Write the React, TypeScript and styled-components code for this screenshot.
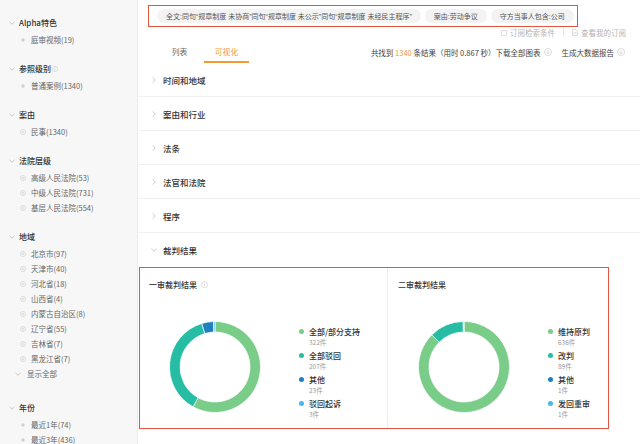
import React from "react";
import styled, { createGlobalStyle } from "styled-components";

const COLORS = {
  ORANGE: "#f29a33",
  RED: "#e5563f",
  TEXT: "#333",
  TEXT_2: "#666",
  MUTED: "#aaa",
  LINE: "#f0f0f0",
};

const GlobalStyle = createGlobalStyle`
  html, body {
    margin: 0;
    padding: 0;
    background: #fff;
  }
  body {
    font-family: "Noto Sans CJK SC", "Noto Sans", sans-serif;
    color: ${COLORS.TEXT};
  }
  #root {
    width: 640px;
    height: 444px;
    overflow: hidden;
  }
`;

type TFilterItem = { label: string; kind: "dot" | "plus" };
type TFilterGroup = { title: string; info?: boolean; more?: boolean; items: TFilterItem[] };

const plus = (label: string): TFilterItem => ({ label, kind: "plus" });
const dot = (label: string): TFilterItem => ({ label, kind: "dot" });

const FILTERS: TFilterGroup[] = [
  { title: "Alpha特色", items: [dot("庭审视频(19)")] },
  { title: "参照级别", info: true, items: [dot("普通案例(1340)")] },
  { title: "案由", items: [plus("民事(1340)")] },
  {
    title: "法院层级",
    items: [plus("高级人民法院(53)"), plus("中级人民法院(731)"), plus("基层人民法院(554)")],
  },
  {
    title: "地域",
    more: true,
    items: [
      plus("北京市(97)"),
      plus("天津市(40)"),
      plus("河北省(18)"),
      plus("山西省(4)"),
      plus("内蒙古自治区(8)"),
      plus("辽宁省(55)"),
      plus("吉林省(7)"),
      plus("黑龙江省(7)"),
    ],
  },
  { title: "年份", items: [dot("最近1年(74)"), dot("最近3年(436)")] },
];

const CHIPS = [
  "全文:同句“规章制度 未协商”同句“规章制度 未公示”同句“规章制度 未经民主程序”",
  "案由:劳动争议",
  "守方当事人包含:公司",
];

const SECTIONS = ["时间和地域", "案由和行业", "法条", "法官和法院", "程序"];

type TSlice = { label: string; count: number; color: string };

const GREEN = "#7acc89";
const TEAL = "#27bda5";
const BLUE = "#1f7fbf";
const SKY = "#46b8ef";

const FIRST: TSlice[] = [
  { label: "全部/部分支持", count: 322, color: GREEN },
  { label: "全部驳回", count: 207, color: TEAL },
  { label: "其他", count: 23, color: BLUE },
  { label: "驳回起诉", count: 3, color: SKY },
];

const SECOND: TSlice[] = [
  { label: "维持原判", count: 636, color: GREEN },
  { label: "改判", count: 89, color: TEAL },
  { label: "其他", count: 1, color: BLUE },
  { label: "发回重审", count: 1, color: SKY },
];

const Chevron = ({ down }: { down?: boolean }) => (
  <svg width="6" height="6" viewBox="0 0 6 6">
    {down ? (
      <polyline points="0.5,1.8 3,4.2 5.5,1.8" fill="none" stroke="#bbb" strokeWidth="0.8" />
    ) : (
      <polyline points="1.8,0.5 4.2,3 1.8,5.5" fill="none" stroke="#bbb" strokeWidth="0.8" />
    )}
  </svg>
);

const InfoIcon = ({ size = 7 }: { size?: number }) => (
  <svg width={size} height={size} viewBox="0 0 10 10">
    <circle cx="5" cy="5" r="4.4" fill="none" stroke="#c4c4c4" strokeWidth="0.8" />
    <line x1="5" y1="4.2" x2="5" y2="7.4" stroke="#c4c4c4" strokeWidth="0.9" />
    <circle cx="5" cy="2.8" r="0.55" fill="#c4c4c4" />
  </svg>
);

const DownloadIcon = () => (
  <svg width="8" height="8" viewBox="0 0 10 10">
    <circle cx="5" cy="5" r="4.4" fill="none" stroke="#c4c4c4" strokeWidth="0.8" />
    <line x1="5" y1="2.6" x2="5" y2="6.8" stroke="#c4c4c4" strokeWidth="0.8" />
    <polyline points="3.3,5.2 5,6.9 6.7,5.2" fill="none" stroke="#c4c4c4" strokeWidth="0.8" />
  </svg>
);

const Marker = ({ kind }: { kind: "dot" | "plus" }) => (
  <svg width="6" height="6" viewBox="0 0 6 6">
    {kind === "dot" ? (
      <circle cx="3" cy="3" r="1.7" fill="#cfcfcf" />
    ) : (
      <g stroke="#cfcfcf" strokeWidth="0.6" fill="none">
        <circle cx="3" cy="3" r="2.6" />
        <line x1="1.6" y1="3" x2="4.4" y2="3" />
        <line x1="3" y1="1.6" x2="3" y2="4.4" />
      </g>
    )}
  </svg>
);

const polar = (cx: number, cy: number, r: number, a: number) =>
  `${(cx + r * Math.sin(a)).toFixed(2)} ${(cy - r * Math.cos(a)).toFixed(2)}`;

const slicePath = (cx: number, cy: number, r0: number, r1: number, a0: number, a1: number) => {
  const large = a1 - a0 > Math.PI ? 1 : 0;
  return [
    `M ${polar(cx, cy, r1, a0)}`,
    `A ${r1} ${r1} 0 ${large} 1 ${polar(cx, cy, r1, a1)}`,
    `L ${polar(cx, cy, r0, a1)}`,
    `A ${r0} ${r0} 0 ${large} 0 ${polar(cx, cy, r0, a0)}`,
    "Z",
  ].join(" ");
};

const Donut = ({ data }: { data: TSlice[] }) => {
  const total = data.reduce((s, d) => s + d.count, 0);
  let start = 0;
  return (
    <svg width="100" height="100" viewBox="0 0 100 100">
      {data.map((d) => {
        const end = start + (d.count / total) * Math.PI * 2;
        const path = slicePath(50, 50, 35, 45.5, start, end);
        start = end;
        return <path key={d.label} d={path} fill={d.color} stroke="#fff" strokeWidth="0.7" />;
      })}
    </svg>
  );
};

const ChartPanel = ({ title, info, data, wide }: { title: string; info?: boolean; data: TSlice[]; wide?: boolean }) => (
  <Panel $wide={wide}>
    <PanelTitle>
      {title}
      {info && <InfoIcon size={7} />}
    </PanelTitle>
    <PanelBody>
      <Donut data={data} />
      <Legend>
        {data.map((d) => (
          <LegendItem key={d.label}>
            <LegendLabel>
              <LegendDot $color={d.color} />
              {d.label}
            </LegendLabel>
            <LegendCount>{d.count}件</LegendCount>
          </LegendItem>
        ))}
      </Legend>
    </PanelBody>
  </Panel>
);

export default function App() {
  return (
    <>
      <GlobalStyle />
      <Page>
        <Sidebar>
          {FILTERS.map((g) => (
            <FilterGroup key={g.title} $more={g.more}>
              <GroupTitle>
                <Chevron down />
                {g.title}
                {g.info && <InfoIcon size={6} />}
              </GroupTitle>
              {g.items.map((it) => (
                <FilterItem key={it.label}>
                  <Marker kind={it.kind} />
                  {it.label}
                </FilterItem>
              ))}
              {g.more && (
                <ShowAll>
                  <Chevron down />
                  显示全部
                </ShowAll>
              )}
            </FilterGroup>
          ))}
        </Sidebar>

        <Main>
          <Conditions>
            {CHIPS.map((c) => (
              <Chip key={c}>{c}</Chip>
            ))}
          </Conditions>

          <SubscribeRow>
            <SubLink>
              <svg width="6" height="6" viewBox="0 0 6 6">
                <rect x="0.5" y="0.5" width="5" height="5" rx="0.6" fill="none" stroke="#c8c8c8" strokeWidth="0.6" />
              </svg>
              订阅检索条件
            </SubLink>
            <SubDivider />
            <SubLink>
              <svg width="6" height="7" viewBox="0 0 6 7">
                <path d="M0.5 0.5 H4 L5.5 2 V6.5 H0.5 Z" fill="none" stroke="#c8c8c8" strokeWidth="0.6" />
                <line x1="1.5" y1="3.5" x2="4.5" y2="3.5" stroke="#c8c8c8" strokeWidth="0.5" />
                <line x1="1.5" y1="5" x2="4.5" y2="5" stroke="#c8c8c8" strokeWidth="0.5" />
              </svg>
              查看我的订阅
            </SubLink>
          </SubscribeRow>

          <TabsRow>
            <Tabs>
              <Tab>列表</Tab>
              <Tab $active>可视化</Tab>
            </Tabs>
            <Summary>
              <span>
                共找到 <Accent>1340</Accent> 条结果（用时 0.867 秒）下载全部图表
              </span>
              <DownloadIcon />
              <SummaryGap />
              <span>生成大数据报告</span>
              <DownloadIcon />
            </Summary>
          </TabsRow>

          {SECTIONS.map((s) => (
            <SectionRow key={s}>
              <Chevron />
              {s}
            </SectionRow>
          ))}
          <SectionRow $last>
            <Chevron down />
            裁判结果
          </SectionRow>

          <ChartsBox>
            <ChartPanel title="一审裁判结果" info data={FIRST} wide />
            <ChartPanel title="二审裁判结果" data={SECOND} />
          </ChartsBox>
        </Main>
      </Page>
    </>
  );
}

const Page = styled.div`
  display: flex;
  width: 640px;
  height: 444px;
`;

const Sidebar = styled.aside`
  flex: 0 0 138px;
  box-sizing: border-box;
  padding-top: 15px;
  background: #f7f7f8;
  border-right: 1px solid #ececec;
  overflow: hidden;
`;

const FilterGroup = styled.div<{ $more?: boolean }>`
  margin-bottom: ${(p) => (p.$more ? 19 : 14)}px;
`;

const GroupTitle = styled.div`
  display: flex;
  align-items: center;
  gap: 4px;
  height: 15px;
  margin-bottom: 2px;
  padding-left: 9px;
  font-size: 8px;
  font-weight: 500;
  color: ${COLORS.TEXT};
  svg:last-child:not(:first-child) {
    margin-left: -3px;
  }
`;

const FilterItem = styled.div`
  display: flex;
  align-items: center;
  gap: 5px;
  height: 15px;
  padding-left: 20px;
  font-size: 7.5px;
  color: ${COLORS.TEXT_2};
`;

const ShowAll = styled.div`
  display: flex;
  align-items: center;
  gap: 6px;
  height: 15px;
  padding-left: 15px;
  font-size: 7.5px;
  color: ${COLORS.TEXT_2};
`;

const Main = styled.main`
  flex: 1;
  display: flex;
  flex-direction: column;
  min-width: 0;
  padding-left: 1px;
`;

const Conditions = styled.div`
  display: flex;
  align-items: center;
  gap: 4px;
  width: 430px;
  height: 22px;
  box-sizing: border-box;
  margin: 5px 0 0 9px;
  padding-left: 8px;
  border: 1.5px solid ${COLORS.RED};
`;

const Chip = styled.span`
  display: inline-flex;
  align-items: center;
  height: 14px;
  padding: 0 9px;
  border-radius: 7px;
  background: #f3f3f3;
  font-family: "Liberation Sans", "Noto Sans CJK SC", sans-serif;
  font-size: 7px;
  color: #555;
  white-space: nowrap;
`;

const SubscribeRow = styled.div`
  display: flex;
  justify-content: flex-end;
  align-items: center;
  height: 11px;
  padding-right: 14px;
  gap: 8px;
`;

const SubLink = styled.span`
  display: inline-flex;
  align-items: center;
  gap: 3px;
  font-size: 7.5px;
  color: #b4b4b4;
`;

const SubDivider = styled.span`
  width: 1px;
  height: 9px;
  background: #e8e8e8;
`;

const TabsRow = styled.div`
  display: flex;
  align-items: center;
  justify-content: space-between;
  height: 21px;
  margin-top: 4px;
  padding: 0 15px 0 18px;
`;

const Tabs = styled.div`
  display: flex;
  gap: 2px;
  height: 100%;
`;

const Tab = styled.span<{ $active?: boolean }>`
  display: flex;
  align-items: center;
  justify-content: center;
  width: 45px;
  box-sizing: border-box;
  border-bottom: 2px solid ${(p) => (p.$active ? COLORS.ORANGE : "transparent")};
  font-size: 7.8px;
  color: ${(p) => (p.$active ? COLORS.ORANGE : COLORS.TEXT_2)};
`;

const Summary = styled.div`
  display: flex;
  align-items: center;
  gap: 3px;
  font-size: 7.5px;
  color: #444;
  white-space: pre;
  padding-bottom: 1px;
`;

const Accent = styled.span`
  color: ${COLORS.ORANGE};
`;

const SummaryGap = styled.span`
  width: 4px;
`;

const SectionRow = styled.div<{ $last?: boolean }>`
  display: flex;
  align-items: center;
  gap: 6px;
  height: 34px;
  box-sizing: border-box;
  padding-left: 12px;
  border-bottom: 1px solid ${(p) => (p.$last ? "transparent" : COLORS.LINE)};
  font-size: 8.5px;
  font-weight: 500;
  color: ${COLORS.TEXT};
`;

const ChartsBox = styled.div`
  display: flex;
  width: 470px;
  height: 162px;
  box-sizing: border-box;
  border: 1.5px solid ${COLORS.RED};
`;

const Panel = styled.section<{ $wide?: boolean }>`
  flex: ${(p) => (p.$wide ? "0 0 248px" : "1")};
  box-sizing: border-box;
  border-right: ${(p) => (p.$wide ? "1px solid #eee" : "none")};
  padding: 10px 0 0 ${(p) => (p.$wide ? 9 : 10)}px;
`;

const PanelTitle = styled.div`
  display: flex;
  align-items: center;
  gap: 4px;
  height: 12px;
  font-size: 8px;
  font-weight: 500;
  color: ${COLORS.TEXT};
`;

const PanelBody = styled.div`
  display: flex;
  align-items: flex-start;
  margin-top: 27px;
  padding-left: 16px;
`;

const Legend = styled.div`
  display: flex;
  flex-direction: column;
  gap: 2px;
  margin: 9px 0 0 34px;
`;

const LegendItem = styled.div`
  display: flex;
  flex-direction: column;
`;

const LegendLabel = styled.div`
  display: flex;
  align-items: center;
  gap: 5px;
  height: 11px;
  font-size: 8px;
  font-weight: 500;
  color: ${COLORS.TEXT};
`;

const LegendDot = styled.span<{ $color: string }>`
  width: 5px;
  height: 5px;
  border-radius: 50%;
  background: ${(p) => p.$color};
`;

const LegendCount = styled.div`
  height: 11px;
  line-height: 11px;
  padding-left: 10px;
  font-size: 6.5px;
  color: #999;
`;
